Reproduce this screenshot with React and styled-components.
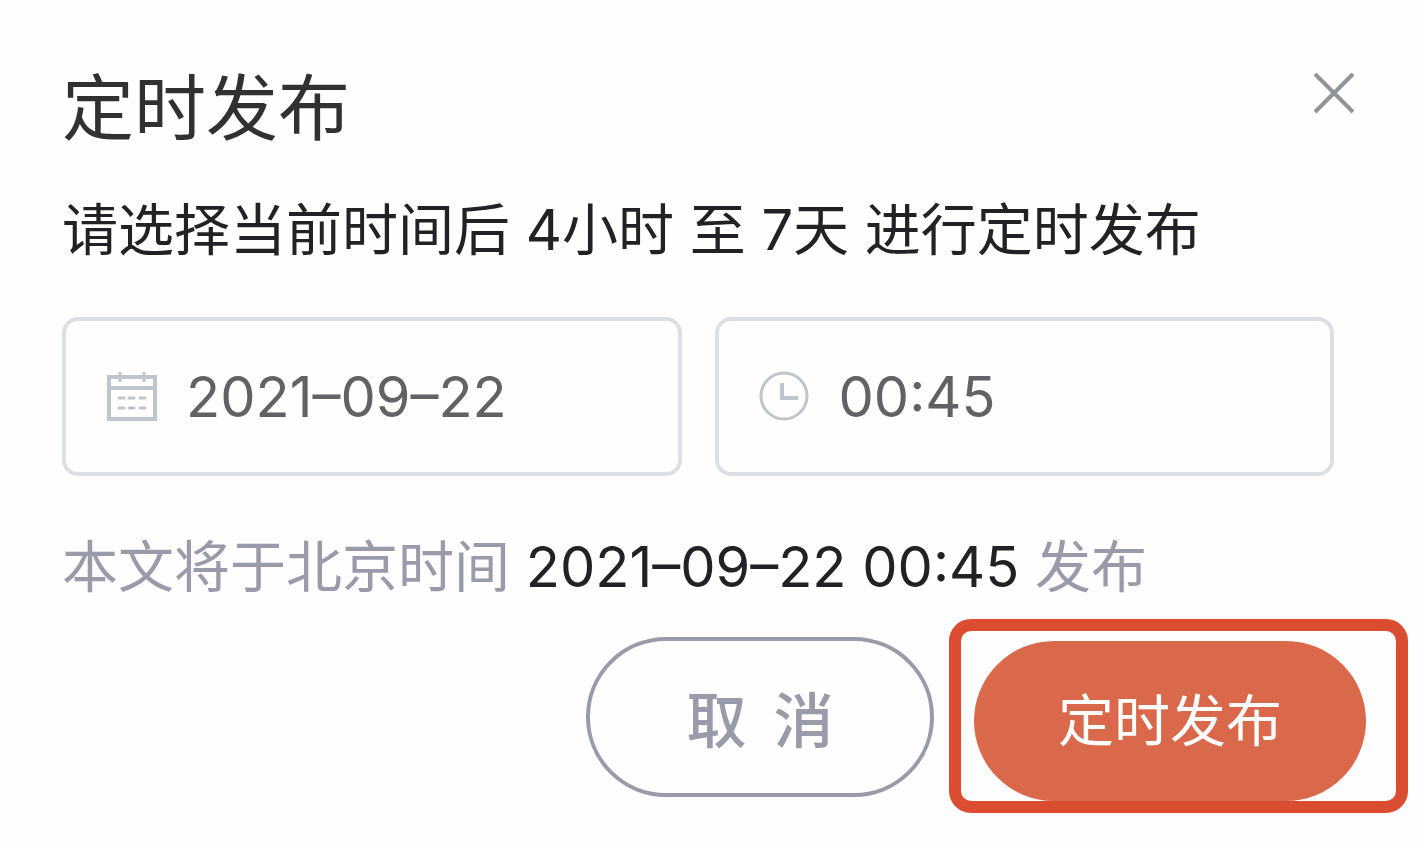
import React, { useState } from 'react';
import styled, { createGlobalStyle } from 'styled-components';

const GlobalStyle = createGlobalStyle`
  *, *::before, *::after {
    box-sizing: border-box;
  }

  body {
    margin: 0;
    background: #fefefe;
    color: #222226;
    font-family: Inter, 'Noto Sans CJK SC', sans-serif;
    font-size: 56px;
    line-height: 80px;
  }

  button,
  input {
    font: inherit;
  }
`;

const Dialog = styled.form`
  display: flex;
  flex-direction: column;
  padding: 64px 12px 30px 62px;
`;

const Header = styled.header`
  display: flex;
  align-items: flex-start;
  justify-content: space-between;
  padding-right: 53px;
`;

const Title = styled.h1`
  margin: 0;
  color: #303133;
  font-size: 72px;
  font-weight: 400;
  line-height: 88px;
`;

const CloseButton = styled.button`
  display: flex;
  padding: 8px 0;
  border: 0;
  background: none;
  color: #909399;
  cursor: pointer;
`;

const Hint = styled.p`
  margin: 38px 0 0;
`;

const Fields = styled.div`
  display: flex;
  gap: 33px;
  margin-top: 47px;
  padding-right: 74px;
`;

const Field = styled.label`
  display: flex;
  flex: 1;
  align-items: center;
  gap: 28px;
  min-width: 0;
  height: 159px;
  padding: 0 40px;
  border: 4px solid #dddfe6;
  border-radius: 16px;
  color: #c0c4cc;

  svg {
    flex: none;
  }
`;

const FieldInput = styled.input`
  flex: 1;
  min-width: 0;
  padding: 0;
  border: 0;
  outline: 0;
  background: none;
  color: #606266;
`;

const Summary = styled.p`
  margin: 51px 0 0;
  color: #999aaa;
`;

const PublishTime = styled.span`
  color: #222226;
`;

const Actions = styled.div`
  display: flex;
  align-items: flex-start;
  justify-content: flex-end;
  gap: 15px;
  margin-top: 12px;
`;

const Button = styled.button`
  height: 160px;
  border: 0;
  border-radius: 80px;
  white-space: pre;
  cursor: pointer;
`;

const CancelButton = styled(Button)`
  width: 348px;
  margin-top: 18px;
  border: 4px solid #999aaa;
  background: #fefefe;
  color: #999aaa;
  font-family: 'Noto Sans CJK SC', sans-serif;
  font-size: 60px;
  font-weight: 500;
`;

const PublishButton = styled(Button)`
  width: 392px;
  background: #da684a;
  color: #fff;
`;

const Highlight = styled.div`
  padding: 10px 30px 0 13px;
  border: 12px solid #db4d31;
  border-radius: 22px;
`;

const CloseIcon = () => (
  <svg width="42" height="42" viewBox="0 0 42 42" fill="none" stroke="currentColor" strokeWidth="4" aria-hidden="true">
    <path d="M2 2l38 38M40 2L2 40" />
  </svg>
);

const CalendarIcon = () => (
  <svg width="52" height="52" viewBox="0 0 52 52" fill="none" stroke="currentColor" strokeWidth="3" aria-hidden="true">
    <path d="M3 6h46v42H3zM3 17h46" strokeWidth="4" />
    <path d="M14 1v10M38 1v10" />
    <path d="M13 27h5M23 27h5M34 27h5M13 37h5M23 37h5M34 37h5" strokeLinecap="round" />
  </svg>
);

const ClockIcon = () => (
  <svg width="52" height="52" viewBox="0 0 52 52" fill="none" stroke="currentColor" strokeWidth="3" aria-hidden="true">
    <circle cx="25" cy="25" r="23" />
    <path d="M23 12v15h16" strokeWidth="4" />
  </svg>
);

const App = () => {
  const [date, setDate] = useState('2021–09–22');
  const [time, setTime] = useState('00:45');

  return (
    <>
      <GlobalStyle />
      <Dialog onSubmit={(e) => e.preventDefault()}>
        <Header>
          <Title>定时发布</Title>
          <CloseButton type="button" aria-label="关闭">
            <CloseIcon />
          </CloseButton>
        </Header>
        <Hint>请选择当前时间后 4小时 至 7天 进行定时发布</Hint>
        <Fields>
          <Field>
            <CalendarIcon />
            <FieldInput aria-label="日期" value={date} onChange={(e) => setDate(e.target.value)} />
          </Field>
          <Field>
            <ClockIcon />
            <FieldInput aria-label="时间" value={time} onChange={(e) => setTime(e.target.value)} />
          </Field>
        </Fields>
        <Summary>
          本文将于北京时间{' '}
          <PublishTime>
            {date} {time}
          </PublishTime>{' '}
          发布
        </Summary>
        <Actions>
          <CancelButton type="button">{'取  消'}</CancelButton>
          <Highlight>
            <PublishButton type="submit">定时发布</PublishButton>
          </Highlight>
        </Actions>
      </Dialog>
    </>
  );
};

export default App;
